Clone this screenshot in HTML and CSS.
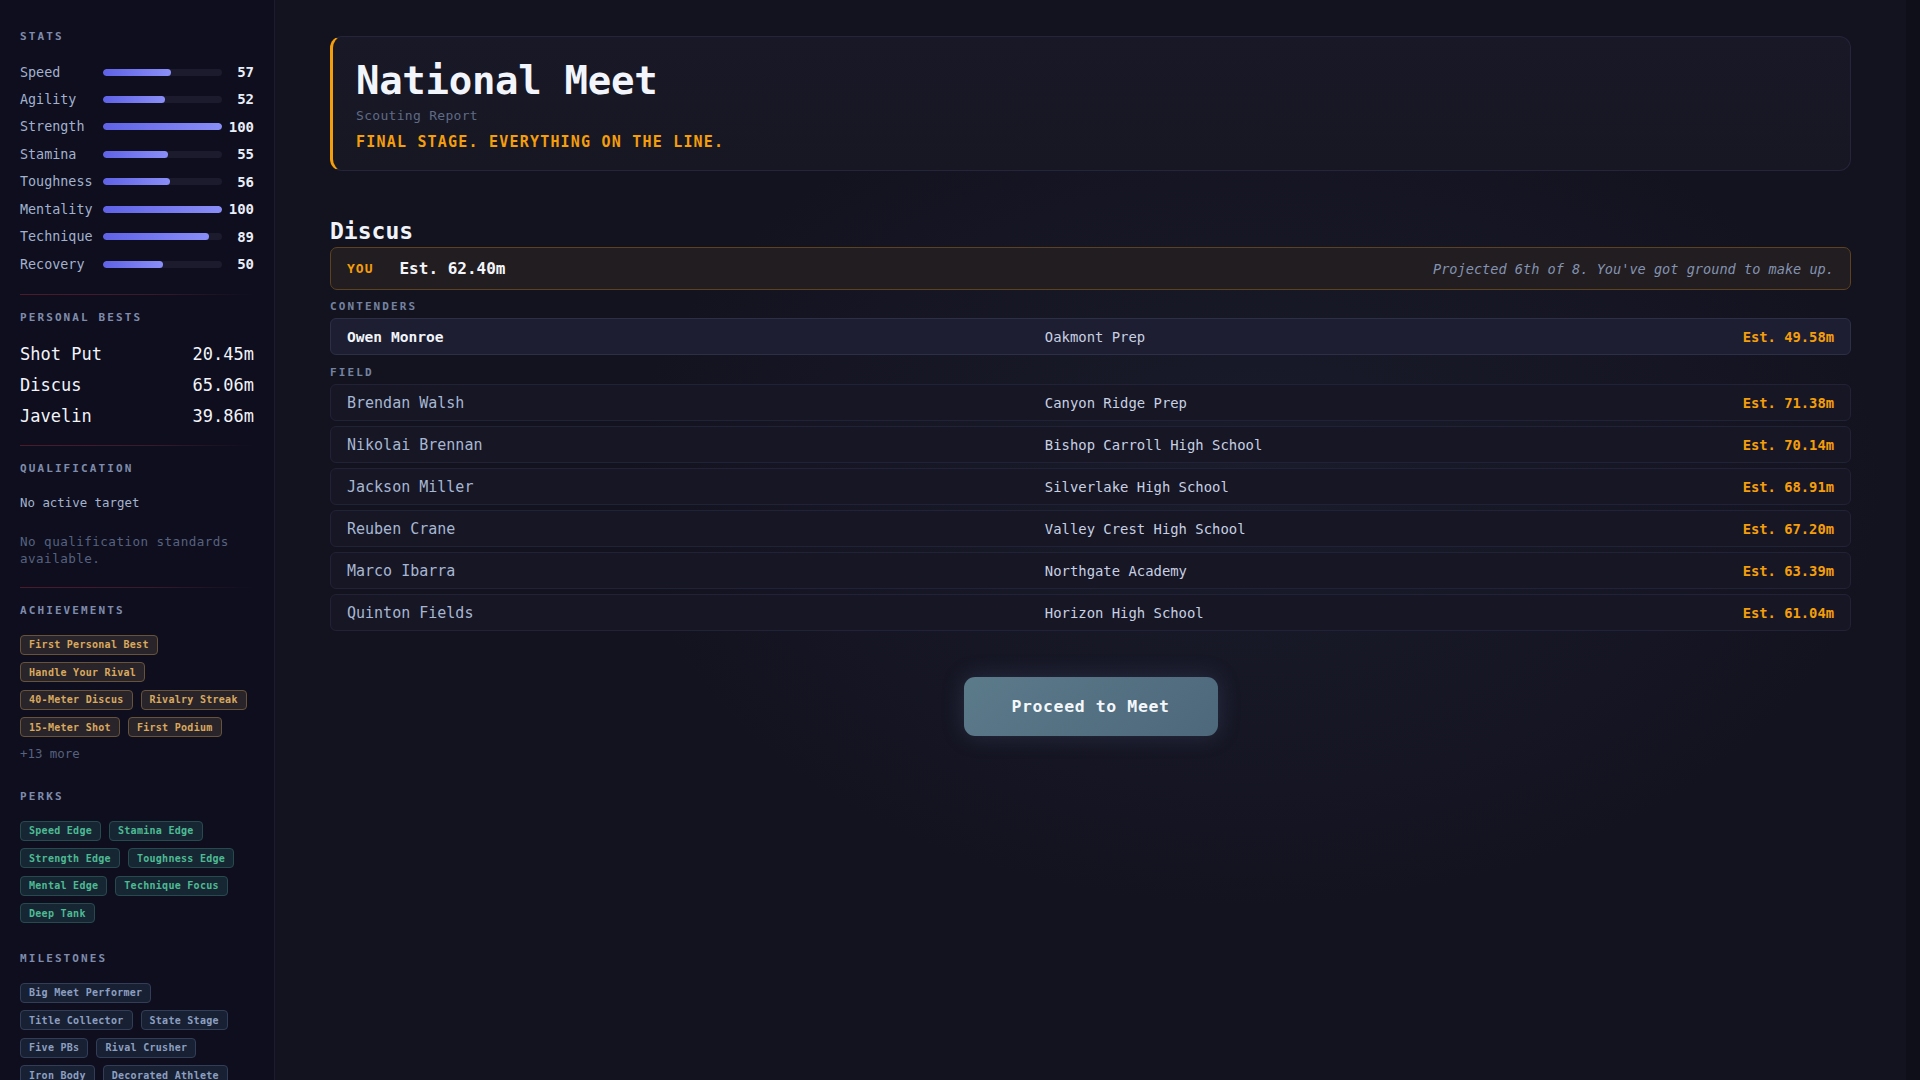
FILE: index.html
```html
<!DOCTYPE html>
<html lang="en">
<head>
<meta charset="utf-8">
<title>National Meet — Scouting Report</title>
<link rel="stylesheet" href="styles.css">
</head>
<body>
<div class="app">
  <aside class="sidebar">
    <h3 class="side-title">Stats</h3>
    <div class="stats">
      <div class="stat"><span class="stat-label">Speed</span><span class="bar"><span class="fill" style="width:57%"></span></span><span class="stat-val">57</span></div>
      <div class="stat"><span class="stat-label">Agility</span><span class="bar"><span class="fill" style="width:52%"></span></span><span class="stat-val">52</span></div>
      <div class="stat"><span class="stat-label">Strength</span><span class="bar"><span class="fill" style="width:100%"></span></span><span class="stat-val">100</span></div>
      <div class="stat"><span class="stat-label">Stamina</span><span class="bar"><span class="fill" style="width:55%"></span></span><span class="stat-val">55</span></div>
      <div class="stat"><span class="stat-label">Toughness</span><span class="bar"><span class="fill" style="width:56%"></span></span><span class="stat-val">56</span></div>
      <div class="stat"><span class="stat-label">Mentality</span><span class="bar"><span class="fill" style="width:100%"></span></span><span class="stat-val">100</span></div>
      <div class="stat"><span class="stat-label">Technique</span><span class="bar"><span class="fill" style="width:89%"></span></span><span class="stat-val">89</span></div>
      <div class="stat"><span class="stat-label">Recovery</span><span class="bar"><span class="fill" style="width:50%"></span></span><span class="stat-val">50</span></div>
    </div>
    <div class="divider div-stats"></div>

    <h3 class="side-title after-div">Personal Bests</h3>
    <div class="pbs">
      <div class="pb"><span>Shot Put</span><span>20.45m</span></div>
      <div class="pb"><span>Discus</span><span>65.06m</span></div>
      <div class="pb"><span>Javelin</span><span>39.86m</span></div>
    </div>
    <div class="divider div-pb"></div>

    <h3 class="side-title after-div">Qualification</h3>
    <p class="qual-target">No active target</p>
    <p class="qual-note">No qualification standards available.</p>
    <div class="divider div-qual"></div>

    <h3 class="side-title after-div">Achievements</h3>
    <div class="chips">
      <span class="chip chip-gold">First Personal Best</span>
      <span class="chip chip-gold">Handle Your Rival</span>
      <span class="chip chip-gold">40-Meter Discus</span>
      <span class="chip chip-gold">Rivalry Streak</span>
      <span class="chip chip-gold">15-Meter Shot</span>
      <span class="chip chip-gold">First Podium</span>
    </div>
    <p class="more">+13 more</p>

    <h3 class="side-title gap-title">Perks</h3>
    <div class="chips">
      <span class="chip chip-teal">Speed Edge</span>
      <span class="chip chip-teal">Stamina Edge</span>
      <span class="chip chip-teal">Strength Edge</span>
      <span class="chip chip-teal">Toughness Edge</span>
      <span class="chip chip-teal">Mental Edge</span>
      <span class="chip chip-teal">Technique Focus</span>
      <span class="chip chip-teal">Deep Tank</span>
    </div>

    <h3 class="side-title gap-title milestones-title">Milestones</h3>
    <div class="chips">
      <span class="chip chip-slate">Big Meet Performer</span>
      <span class="chip chip-slate">Title Collector</span>
      <span class="chip chip-slate">State Stage</span>
      <span class="chip chip-slate">Five PBs</span>
      <span class="chip chip-slate">Rival Crusher</span>
      <span class="chip chip-slate">Iron Body</span>
      <span class="chip chip-slate">Decorated Athlete</span>
    </div>
  </aside>

  <main class="main">
    <section class="hero">
      <h1 class="hero-title">National Meet</h1>
      <p class="hero-sub">Scouting Report</p>
      <p class="hero-tag">FINAL STAGE. EVERYTHING ON THE LINE.</p>
    </section>

    <h2 class="event-title">Discus</h2>
    <div class="you-row">
      <span class="you-tag">YOU</span>
      <span class="you-est">Est. 62.40m</span>
      <span class="you-note">Projected 6th of 8. You've got ground to make up.</span>
    </div>

    <h4 class="group-title">Contenders</h4>
    <div class="row row-contender">
      <span class="name">Owen Monroe</span>
      <span class="school">Oakmont Prep</span>
      <span class="est">Est. 49.58m</span>
    </div>

    <h4 class="group-title field-title">Field</h4>
    <div class="field-list">
      <div class="row"><span class="name">Brendan Walsh</span><span class="school">Canyon Ridge Prep</span><span class="est">Est. 71.38m</span></div>
      <div class="row"><span class="name">Nikolai Brennan</span><span class="school">Bishop Carroll High School</span><span class="est">Est. 70.14m</span></div>
      <div class="row"><span class="name">Jackson Miller</span><span class="school">Silverlake High School</span><span class="est">Est. 68.91m</span></div>
      <div class="row"><span class="name">Reuben Crane</span><span class="school">Valley Crest High School</span><span class="est">Est. 67.20m</span></div>
      <div class="row"><span class="name">Marco Ibarra</span><span class="school">Northgate Academy</span><span class="est">Est. 63.39m</span></div>
      <div class="row"><span class="name">Quinton Fields</span><span class="school">Horizon High School</span><span class="est">Est. 61.04m</span></div>
    </div>

    <div class="actions">
      <button class="proceed" type="button">Proceed to Meet</button>
    </div>
  </main>

  <div class="scroll-track"></div>
</div>
</body>
</html>
```

FILE: styles.css
```css
* { box-sizing: border-box; }

html, body {
  margin: 0;
  padding: 0;
  height: 100%;
}

body {
  font-family: "DejaVu Sans Mono", "Liberation Mono", monospace;
  background: #131320;
  color: #e8ecf5;
  overflow: hidden;
}

.app {
  display: flex;
  height: 100vh;
}

/* ---------- Sidebar ---------- */
.sidebar {
  width: 275px;
  flex: 0 0 275px;
  background: #0e0e1f;
  border-right: 1px solid #1c1c2e;
  padding: 30px 20px 20px 20px;
  overflow: hidden;
}

.side-title {
  margin: 0;
  font-size: 11px;
  line-height: 14px;
  font-weight: 700;
  letter-spacing: 2.1px;
  text-transform: uppercase;
  color: #7f8cab;
}

.side-title.after-div { margin-top: 16px; }
.side-title.gap-title { margin-top: 28px; }
.side-title.milestones-title { margin-top: 28.5px; }

.stats {
  margin-top: 18px;
  display: flex;
  flex-direction: column;
  gap: 7.45px;
}

.stat {
  display: grid;
  grid-template-columns: 83px 1fr 32px;
  align-items: center;
  height: 20px;
}

.stat-label {
  font-size: 13.4px;
  color: #a2b2cd;
}

.bar {
  display: block;
  height: 7px;
  border-radius: 4px;
  background: #1b1b2d;
  overflow: hidden;
}

.fill {
  display: block;
  height: 100%;
  border-radius: 4px;
  background: linear-gradient(90deg, #5f62e6, #8a8ef7);
}

.stat-val {
  text-align: right;
  font-size: 14px;
  font-weight: 700;
  color: #e9edf7;
}

.divider {
  height: 1px;
  background: linear-gradient(90deg, #4b1b2b 0%, #3a1a2a 55%, rgba(40,20,40,0) 100%);
}
.div-stats { margin-top: 20px; }
.div-pb { margin-top: 13.5px; }
.div-qual { margin-top: 19.5px; }

.pbs { margin-top: 13.5px; }

.pb {
  display: flex;
  justify-content: space-between;
  font-size: 17px;
  line-height: 31px;
  color: #f2f4f9;
}

.qual-target {
  margin: 18px 0 0 0;
  font-size: 12.4px;
  line-height: 18px;
  color: #a4b3cc;
}

.qual-note {
  margin: 22px 0 0 0;
  font-size: 12.6px;
  line-height: 16.5px;
  letter-spacing: 0.45px;
  color: #56627e;
}

.chips {
  margin-top: 17px;
  display: flex;
  flex-wrap: wrap;
  gap: 7.5px 8px;
}

.chip {
  display: inline-flex;
  align-items: center;
  height: 20px;
  padding: 0 8px;
  border: 1px solid;
  border-radius: 4px;
  font-size: 10px;
  font-weight: 700;
  letter-spacing: 0.28px;
  white-space: nowrap;
}

.chip-gold {
  background: #29242a;
  border-color: #66533a;
  color: #d9a95e;
}

.chip-teal {
  background: #172633;
  border-color: #274a4f;
  color: #4dba93;
}

.chip-slate {
  background: #182033;
  border-color: #323e57;
  color: #8c9fc0;
}

.more {
  margin: 8.5px 0 0 0;
  font-size: 12.4px;
  line-height: 16px;
  color: #56627e;
}

/* ---------- Main ---------- */
.main {
  flex: 1;
  min-width: 0;
  padding: 36px 55px;
  background:
    radial-gradient(ellipse 900px 600px at 60% 45%, rgba(32,34,52,0.55), rgba(19,19,32,0) 70%),
    #131320;
}

.hero {
  border: 1px solid #24253a;
  border-left: 3px solid #f59e0b;
  border-radius: 12px;
  background: linear-gradient(180deg, #181826, #171724);
  padding: 21px 24px 19px 23px;
}

.hero-title {
  margin: 0;
  font-size: 39px;
  line-height: 45px;
  font-weight: 700;
  letter-spacing: -0.3px;
  color: #f2f5fb;
}

.hero-sub {
  margin: 5px 0 0 0;
  font-size: 13px;
  line-height: 16px;
  letter-spacing: 0.3px;
  color: #5f6b86;
}

.hero-tag {
  margin: 9px 0 0 0;
  font-size: 15px;
  line-height: 18px;
  font-weight: 700;
  letter-spacing: 1.2px;
  color: #f59e0b;
}

.event-title {
  margin: 46px 0 0 0;
  font-size: 23px;
  line-height: 28px;
  font-weight: 700;
  color: #f0f3fa;
}

.you-row {
  margin-top: 2px;
  height: 43px;
  display: flex;
  align-items: center;
  padding: 0 16px;
  border: 1px solid #5c421f;
  border-radius: 7px;
  background: #221d20;
}

.you-tag {
  font-size: 13px;
  font-weight: 700;
  letter-spacing: 1px;
  color: #f59e0b;
  margin-right: 26px;
}

.you-est {
  font-size: 16px;
  font-weight: 700;
  color: #f3f5fa;
}

.you-note {
  margin-left: auto;
  font-size: 13.6px;
  font-style: italic;
  color: #8393b0;
}

.group-title {
  margin: 10px 0 0 0;
  font-size: 11px;
  line-height: 14px;
  font-weight: 700;
  letter-spacing: 2.1px;
  text-transform: uppercase;
  color: #7583a1;
}

.group-title.field-title { margin-top: 10.5px; }

.row {
  display: grid;
  grid-template-columns: 1fr 1fr auto;
  column-gap: 16px;
  align-items: center;
  height: 37px;
  padding: 0 16px;
  border: 1px solid #212236;
  border-radius: 6px;
  background: #161625;
}

.row-contender {
  margin-top: 4px;
  background: #1d1e31;
  border-color: #2d2f46;
}

.field-list {
  margin-top: 4.5px;
  display: flex;
  flex-direction: column;
  gap: 5px;
}

.name {
  font-size: 15px;
  color: #a7b7d2;
}

.row-contender .name {
  font-size: 14.6px;
  font-weight: 700;
  color: #f1f4fa;
}

.school {
  font-size: 13.9px;
  color: #c8d0e2;
}

.est {
  font-size: 13.8px;
  font-weight: 700;
  color: #f59e0b;
  text-align: right;
}

.actions {
  margin-top: 46px;
  display: flex;
  justify-content: center;
}

.proceed {
  width: 254px;
  height: 59px;
  border: none;
  border-radius: 11px;
  background: linear-gradient(135deg, #5b7a8a, #4d687b);
  box-shadow: 0 0 22px rgba(90, 110, 150, 0.28);
  font-family: "DejaVu Sans Mono", "Liberation Mono", monospace;
  font-size: 16.5px;
  font-weight: 700;
  letter-spacing: 0.6px;
  color: #f4f7fb;
}

.scroll-track {
  width: 14px;
  flex: 0 0 14px;
  background: #0f0f19;
}
```
